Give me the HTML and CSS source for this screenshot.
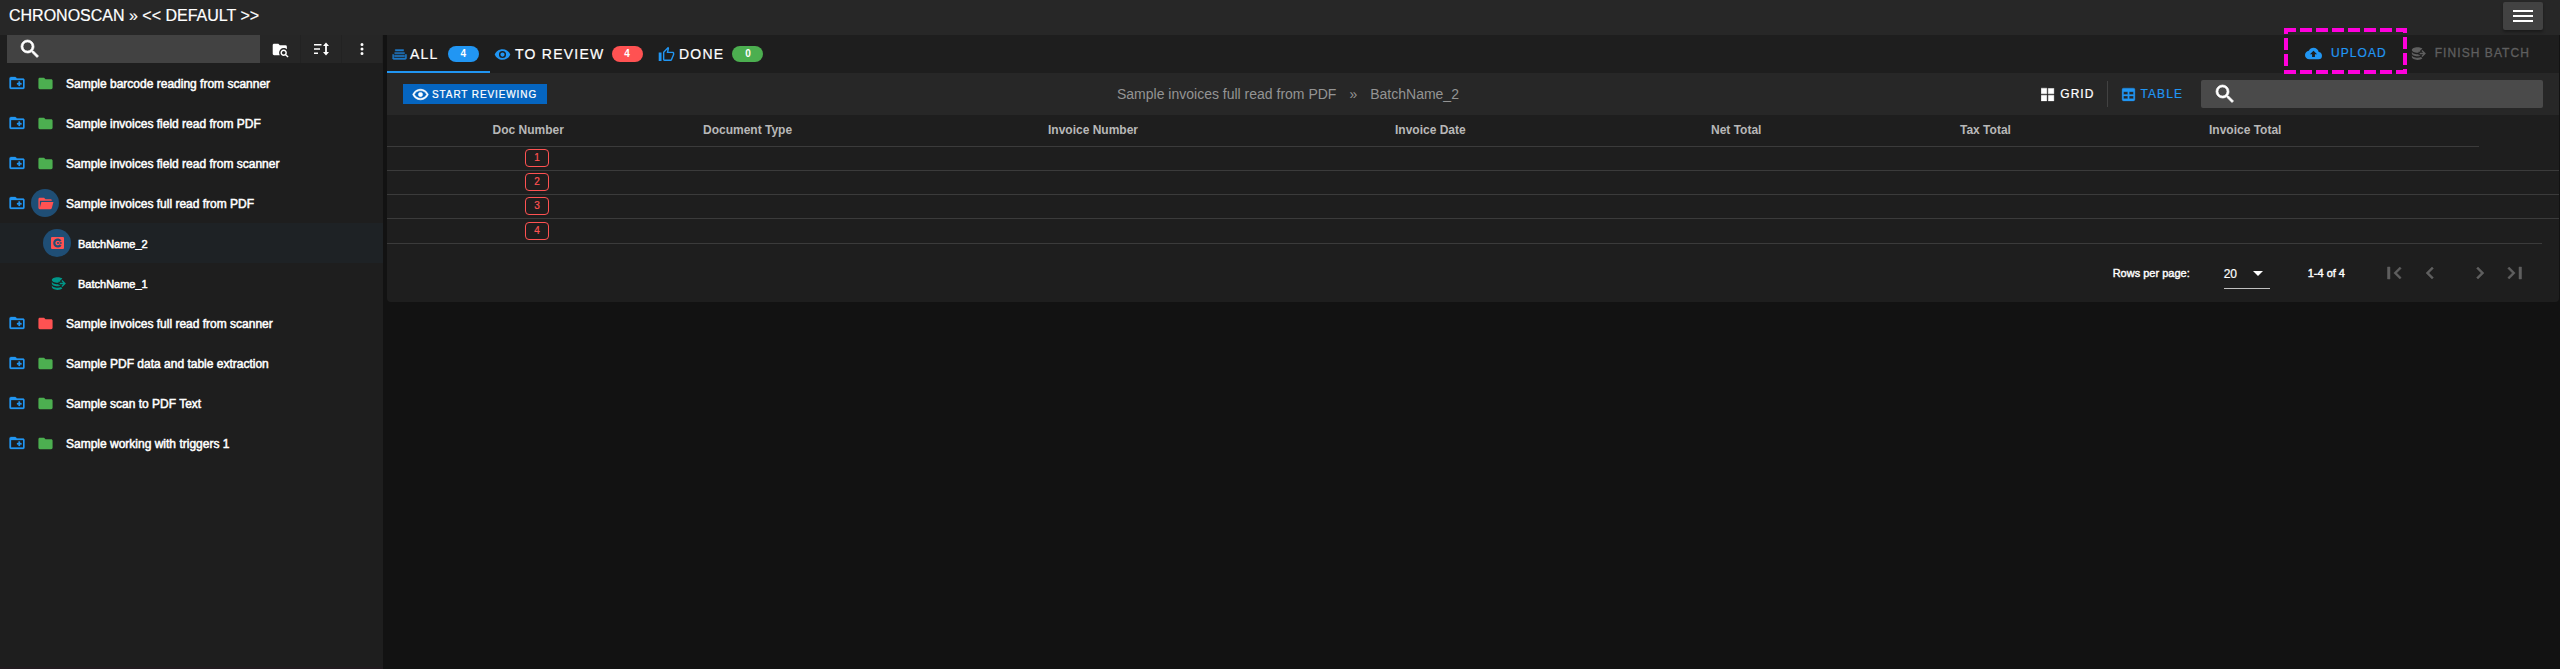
FILE: index.html
```html
<!DOCTYPE html>
<html lang="en">
<head>
<meta charset="utf-8">
<title>ChronoScan</title>
<link rel="stylesheet" href="styles.css">
</head>
<body>
<svg class="defs" width="0" height="0">
  <symbol id="magnify" viewBox="0 0 24 24"><path d="M9.5,3A6.5,6.5 0 0,1 16,9.5C16,11.11 15.41,12.59 14.44,13.73L14.71,14H15.5L20.5,19L19,20.5L14,15.5V14.71L13.73,14.44C12.59,15.41 11.11,16 9.5,16A6.5,6.5 0 0,1 3,9.5A6.5,6.5 0 0,1 9.5,3M9.5,5C7,5 5,7 5,9.5C5,12 7,14 9.5,14C12,14 14,12 14,9.5C14,7 12,5 9.5,5Z" stroke="currentColor" stroke-width=".7"/></symbol>
  <symbol id="folder" viewBox="0 0 24 24"><path d="M10,4H4C2.89,4 2,4.89 2,6V18A2,2 0 0,0 4,20H20A2,2 0 0,0 22,18V8C22,6.89 21.1,6 20,6H12L10,4Z"/></symbol>
  <symbol id="folder-open" viewBox="0 0 24 24"><path d="M19,20H4C2.89,20 2,19.1 2,18V6C2,4.89 2.89,4 4,4H10L12,6H19A2,2 0 0,1 21,8H4V18L6.14,10H23.21L20.93,18.5C20.7,19.37 19.92,20 19,20Z"/></symbol>
  <symbol id="folder-add" viewBox="0 0 24 24"><path d="M20,18H4V8H20M20,6H12L10,4H4A2,2 0 0,0 2,6V18A2,2 0 0,0 4,20H20A2,2 0 0,0 22,18V8C22,6.89 21.1,6 20,6M14,10V12H12V14H14V16H16V14H18V12H16V10Z" stroke="currentColor" stroke-width=".4"/></symbol>
  <symbol id="folder-search" viewBox="0 0 24 24"><path d="M16.5,12C19,12 21,14 21,16.5C21,17.38 20.75,18.21 20.31,18.9L23.39,22L22,23.39L18.88,20.32C18.19,20.75 17.37,21 16.5,21C14,21 12,19 12,16.5C12,14 14,12 16.5,12M16.5,14A2.5,2.5 0 0,0 14,16.5A2.5,2.5 0 0,0 16.5,19A2.5,2.5 0 0,0 19,16.5A2.5,2.5 0 0,0 16.5,14M9,4L11,6H19A2,2 0 0,1 21,8V11.81C19.83,10.69 18.25,10 16.5,10A6.5,6.5 0 0,0 10,16.5C10,17.79 10.37,19 11,20H3C1.89,20 1,19.1 1,18V6C1,4.89 1.89,4 3,4H9Z"/></symbol>
  <symbol id="sort" viewBox="0 0 18 18"><path d="M2,4H9.5V5.5H2ZM2,8.2H8V9.7H2ZM2,12.5H6V14H2ZM14,2.5L17,6H14.9V12H17L14,15.5L11,12H13.1V6H11Z"/></symbol>
  <symbol id="dots" viewBox="0 0 24 24"><path d="M12,16A2,2 0 0,1 14,18A2,2 0 0,1 12,20A2,2 0 0,1 10,18A2,2 0 0,1 12,16M12,10A2,2 0 0,1 14,12A2,2 0 0,1 12,14A2,2 0 0,1 10,12A2,2 0 0,1 12,10M12,4A2,2 0 0,1 14,6A2,2 0 0,1 12,8A2,2 0 0,1 10,6A2,2 0 0,1 12,4Z"/></symbol>
  <symbol id="database-export" viewBox="0 0 24 24"><path d="M12,3C7.58,3 4,4.79 4,7C4,9.21 7.58,11 12,11C12.5,11 13,10.97 13.5,10.92V9.5H16.39L15.39,8.5L18.9,5C17.5,3.8 14.94,3 12,3M18.92,7.08L17.5,8.5L20,11H15V13H20L17.5,15.5L18.92,16.92L23.84,12M4,9V12C4,14.21 7.58,16 12,16C13.17,16 14.26,15.85 15.25,15.63L16.38,14.5H13.5V12.92C13,12.97 12.5,13 12,13C7.58,13 4,11.21 4,9M4,14V17C4,19.21 7.58,21 12,21C14.94,21 17.5,20.2 18.9,19L17,17.1C15.61,17.66 13.9,18 12,18C7.58,18 4,16.21 4,14Z"/></symbol>
  <symbol id="eye" viewBox="0 0 24 24"><path d="M12,9A3,3 0 0,0 9,12A3,3 0 0,0 12,15A3,3 0 0,0 15,12A3,3 0 0,0 12,9M12,17A5,5 0 0,1 7,12A5,5 0 0,1 12,7A5,5 0 0,1 17,12A5,5 0 0,1 12,17M12,4.5C7,4.5 2.73,7.61 1,12C2.73,16.39 7,19.5 12,19.5C17,19.5 21.27,16.39 23,12C21.27,7.61 17,4.5 12,4.5Z"/></symbol>
  <symbol id="eye-outline" viewBox="0 0 24 24"><path stroke="currentColor" stroke-width=".8" d="M12,9A3,3 0 0,1 15,12A3,3 0 0,1 12,15A3,3 0 0,1 9,12A3,3 0 0,1 12,9M12,4.5C17,4.5 21.27,7.61 23,12C21.27,16.39 17,19.5 12,19.5C7,19.5 2.73,16.39 1,12C2.73,7.61 7,4.5 12,4.5M3.18,12C4.83,15.36 8.24,17.5 12,17.5C15.76,17.5 19.17,15.36 20.82,12C19.17,8.64 15.76,6.5 12,6.5C8.24,6.5 4.83,8.64 3.18,12Z"/></symbol>
  <symbol id="thumb" viewBox="0 0 24 24"><path d="M5,9V21H1V9H5M9,21A2,2 0 0,1 7,19V9C7,8.45 7.22,7.95 7.59,7.59L14.17,1L15.23,2.06C15.5,2.33 15.67,2.7 15.67,3.11L15.64,3.43L14.69,8H21C22.11,8 23,8.9 23,10V12C23,12.26 22.95,12.5 22.86,12.73L19.84,19.78C19.54,20.5 18.83,21 18,21H9M9,19H18.03L21,12V10H12.21L13.34,4.68L9,9.03V19Z"/></symbol>
  <symbol id="tray" viewBox="0 0 24 24"><path d="M18 5H6V7H18M5 9H19V11H5M2 12H4V17H20V12H22V17A2 2 0 0 1 20 19H4A2 2 0 0 1 2 17M19 13H5V15H19Z" stroke="currentColor" stroke-width=".6"/></symbol>
  <symbol id="cloud-upload" viewBox="0 0 24 24"><path d="M14,13V17H10V13H7L12,8L17,13M19.35,10.03C18.67,6.59 15.64,4 12,4C9.11,4 6.6,5.64 5.35,8.03C2.34,8.36 0,10.9 0,14A6,6 0 0,0 6,20H19A5,5 0 0,0 24,15C24,12.36 21.95,10.22 19.35,10.03Z"/></symbol>
  <symbol id="grid" viewBox="0 0 24 24"><path d="M3,11H11V3H3M3,21H11V13H3M13,21H21V13H13M13,3V11H21V3" stroke="currentColor" stroke-width=".5"/></symbol>
  <symbol id="table" viewBox="0 0 24 24"><path d="M5,3H19A2,2 0 0,1 21,5V19A2,2 0 0,1 19,21H5A2,2 0 0,1 3,19V5A2,2 0 0,1 5,3M5,8V12H11V8H5M13,8V12H19V8H13M5,14V18H11V14H5M13,14V18H19V14H13Z" stroke="currentColor" stroke-width=".5"/></symbol>
  <symbol id="page-first" viewBox="0 0 24 24"><path d="M19.2,16.59L14.6,12L19.2,7.41L17.8,6L11.8,12L17.8,18ZM5.5,6H8V18H5.5Z" stroke="currentColor" stroke-width=".5"/></symbol>
  <symbol id="chevron" viewBox="0 0 24 24"><path d="M15.41,16.58L10.83,12L15.41,7.41L14,6L8,12L14,18L15.41,16.58Z" stroke="currentColor" stroke-width=".5"/></symbol>
</svg>

<header class="app-bar">
  <h1 class="title">CHRONOSCAN » &lt;&lt; DEFAULT &gt;&gt;</h1>
  <button class="menu"><i></i><i></i><i></i></button>
</header>

<div class="body">
  <aside class="sidebar">
    <div class="tools">
      <div class="side-search"><svg class="i24"><use href="#magnify"/></svg></div>
      <button class="tool"><svg class="i17"><use href="#folder-search"/></svg></button>
      <button class="tool"><svg class="i18"><use href="#sort"/></svg></button>
      <button class="tool"><svg class="i18"><use href="#dots"/></svg></button>
    </div>
    <div class="job"><svg class="i18 add"><use href="#folder-add"/></svg><span class="dot"><svg class="i17 green"><use href="#folder"/></svg></span><span class="name">Sample barcode reading from scanner</span></div>
    <div class="job"><svg class="i18 add"><use href="#folder-add"/></svg><span class="dot"><svg class="i17 green"><use href="#folder"/></svg></span><span class="name">Sample invoices field read from PDF</span></div>
    <div class="job"><svg class="i18 add"><use href="#folder-add"/></svg><span class="dot"><svg class="i17 green"><use href="#folder"/></svg></span><span class="name">Sample invoices field read from scanner</span></div>
    <div class="job"><svg class="i18 add"><use href="#folder-add"/></svg><span class="dot active"><svg class="i17 red"><use href="#folder-open"/></svg></span><span class="name">Sample invoices full read from PDF</span></div>
    <div class="job batch selected"><span class="dot active"><svg class="batch-icon" viewBox="0 0 13 12"><rect width="13" height="12" rx="1" fill="#ff5252"/><path d="M9.6 4.2A3.4 3.4 0 1 0 9.6 7.8" fill="none" stroke="#1f4e75" stroke-width="2.2"/><path d="M6 6H11" stroke="#1f4e75" stroke-width="1.6" stroke-dasharray="2 .7"/></svg></span><span class="name">BatchName_2</span></div>
    <div class="job batch"><span class="dot"><svg class="i17 teal"><use href="#database-export"/></svg></span><span class="name">BatchName_1</span></div>
    <div class="job"><svg class="i18 add"><use href="#folder-add"/></svg><span class="dot"><svg class="i17 red"><use href="#folder"/></svg></span><span class="name">Sample invoices full read from scanner</span></div>
    <div class="job"><svg class="i18 add"><use href="#folder-add"/></svg><span class="dot"><svg class="i17 green"><use href="#folder"/></svg></span><span class="name">Sample PDF data and table extraction</span></div>
    <div class="job"><svg class="i18 add"><use href="#folder-add"/></svg><span class="dot"><svg class="i17 green"><use href="#folder"/></svg></span><span class="name">Sample scan to PDF Text</span></div>
    <div class="job"><svg class="i18 add"><use href="#folder-add"/></svg><span class="dot"><svg class="i17 green"><use href="#folder"/></svg></span><span class="name">Sample working with triggers 1</span></div>
  </aside>

  <main class="main">
    <section class="panel">
      <nav class="tabs">
        <div class="tab tab-all"><svg class="i17"><use href="#tray"/></svg><span class="label">ALL</span><b class="badge blue-bg">4</b></div>
        <div class="tab tab-review"><svg class="i17"><use href="#eye"/></svg><span class="label">TO REVIEW</span><b class="badge red-bg">4</b></div>
        <div class="tab tab-done"><svg class="i17"><use href="#thumb"/></svg><span class="label">DONE</span><b class="badge green-bg">0</b></div>
        <div class="actions">
          <button class="action upload"><svg class="i17"><use href="#cloud-upload"/></svg>UPLOAD
            <svg class="marker" viewBox="0 0 123 46" fill="none" stroke="#ff00dc" stroke-width="4">
              <path d="M0 2H123M0 44H123" stroke-dasharray="12 4"/>
              <path d="M2 0V6M2 10V22M2 26V38M2 42V46M121 0V5M121 9V21M121 25V37M121 41V46"/>
            </svg>
          </button>
          <button class="action finish"><svg class="i17"><use href="#database-export"/></svg>FINISH BATCH</button>
        </div>
      </nav>
      <div class="toolbar">
        <button class="start"><svg class="i17"><use href="#eye-outline"/></svg>START REVIEWING</button>
        <div class="crumbs"><span>Sample invoices full read from PDF</span><span>»</span><span>BatchName_2</span></div>
        <div class="views">
          <button class="view"><svg class="i17"><use href="#grid"/></svg>GRID</button>
          <button class="view on"><svg class="i17"><use href="#table"/></svg>TABLE</button>
          <div class="search"><svg class="i24"><use href="#magnify"/></svg></div>
        </div>
      </div>
      <div class="thead"><span>Doc Number</span><span>Document Type</span><span>Invoice Number</span><span>Invoice Date</span><span>Net Total</span><span>Tax Total</span><span>Invoice Total</span></div>
      <div class="row"><span class="chip">1</span></div>
      <div class="row"><span class="chip">2</span></div>
      <div class="row"><span class="chip">3</span></div>
      <div class="row last"><span class="chip">4</span></div>
      <footer class="pager">
        <span class="rpp">Rows per page:</span>
        <span class="select">20<i class="caret"></i></span>
        <span class="range">1-4 of 4</span>
        <svg class="i24 nav-first"><use href="#page-first"/></svg>
        <svg class="i24 nav-prev"><use href="#chevron"/></svg>
        <svg class="i24 flip nav-next"><use href="#chevron"/></svg>
        <svg class="i24 flip"><use href="#page-first"/></svg>
      </footer>
    </section>
  </main>
</div>
</body>
</html>
```
FILE: styles.css
```css
* { box-sizing: border-box; }
body { margin: 0; width: 2560px; height: 669px; overflow: hidden; background: #121212; color: #fff; font-family: "Liberation Sans", Arial, sans-serif; font-size: 12px; }
button { border: 0; padding: 0; margin: 0; background: none; color: inherit; font: inherit; white-space: nowrap; }
svg { fill: currentColor; display: block; flex: none; }
.defs { position: absolute; }
.i17 { width: 17px; height: 17px; }
.i18 { width: 18px; height: 18px; }
.i24 { width: 24px; height: 24px; }
.flip { transform: scaleX(-1); }
.green { color: #4caf50; }
.red { color: #ff5252; }
.teal { color: #009688; }

.app-bar { height: 35px; background: #272727; display: flex; justify-content: space-between; align-items: flex-start; padding: 2px 17px 0 9px; }
.title { margin: 0; font-size: 16px; font-weight: 400; line-height: 27px; -webkit-text-stroke: .2px #fff; }
.menu { width: 40px; height: 28px; border-radius: 2px; background: #424242; box-shadow: 0 2px 3px rgba(0,0,0,.35); display: flex; flex-direction: column; align-items: center; justify-content: center; gap: 3px; }
.menu i { width: 20px; height: 2px; background: #fff; }

.body { display: flex; height: 634px; }
.sidebar { width: 383px; margin-right: 4px; background: #1e1e1e; border-bottom: 2px solid #221c20; flex: none; }
.tools { display: flex; height: 28px; padding-left: 7px; }
.side-search { width: 253px; background: #424242; padding: 2px 0 0 11px; }
.tool { width: 41px; background: #262626; display: flex; align-items: center; justify-content: center; border-right: 1px solid #222; }
.job { height: 40px; display: flex; align-items: center; padding-left: 8px; white-space: nowrap; }
.name { padding-top: 1px; -webkit-text-stroke: .5px #fff; }
.add { color: #2196f3; margin-right: 5px; }
.dot { width: 28px; height: 28px; border-radius: 50%; display: flex; align-items: center; justify-content: center; margin-right: 7px; flex: none; }
.dot.active { background: #1f4e75; }
.batch { padding-left: 43px; font-size: 11px; }
.selected { background: #1e2225; }
.batch-icon { width: 13px; height: 12px; }

.main { width: 2172px; }
.panel { background: #1e1e1e; border-radius: 0 0 4px 4px; height: 267px; }
.tabs { height: 38px; display: flex; }
.tab { display: flex; align-items: center; font-size: 14px; letter-spacing: 1.25px; color: #fff; }
.tab svg { color: #2196f3; margin-right: 3px; }
.tab .label { -webkit-text-stroke: .2px #fff; }
.tab-all { width: 103px; padding-left: 4px; border-bottom: 2px solid #2196f3; padding-top: 2px; }
.tab-all svg { color: #1e78c5; margin-right: 2px; }
.tab-all .badge { margin-left: 9px; }
.tab-review { padding-left: 4px; width: 168px; }
.tab-review svg { margin-right: 4px; }
.tab-review .badge { margin-left: 7px; }
.tab-done { width: 130px; }
.tab-done svg { margin-right: 4px; }
.badge { width: 31px; height: 16px; border-radius: 8px; font-size: 10px; line-height: 16px; text-align: center; letter-spacing: 0; margin-left: 8px; }
.blue-bg { background: #2196f3; }
.red-bg { background: #ff5252; }
.green-bg { background: #4caf50; }
.actions { margin-left: auto; display: flex; padding-right: 29px; height: 36px; }
.action { display: flex; align-items: center; letter-spacing: 1.07px; gap: 9px; }
.upload { color: #2196f3; position: relative; margin-right: 22px; -webkit-text-stroke: .2px #2196f3; }
.finish { color: #5f5f5f; -webkit-text-stroke: .3px #5f5f5f; }
.marker { position: absolute; left: -21px; top: -7px; width: 123px; height: 46px; }

.toolbar { height: 42px; background: #272727; display: flex; align-items: center; padding: 0 16px; }
.start { width: 144px; height: 20px; background: #0565c0; display: flex; align-items: center; gap: 3px; padding-left: 9px; font-size: 10px; letter-spacing: .893px; -webkit-text-stroke: .2px #fff; }
.crumbs { display: flex; gap: 13px; font-size: 14px; color: #949494; margin-left: 570px; }
.views { display: flex; align-items: center; margin-left: auto; }
.view { height: 26px; display: flex; align-items: center; gap: 4px; letter-spacing: 1.07px; padding-right: 12px; -webkit-text-stroke: .2px; }
.view.on { color: #2196f3; border-left: 1px solid #424242; padding: 0 18px 0 12px; }
.search { width: 342px; height: 28px; border-radius: 2px; background: #4a4a4a; padding: 2px 0 0 12px; }

.thead { width: 2092px; height: 32px; border-bottom: 1px solid #3b3b3b; display: grid; grid-template-columns: 210.5px 345px 347px 316px 249px 249px 1fr; padding-left: 105.5px; font-weight: 700; color: #b8b8b8; line-height: 30px; }
.row { height: 24px; border-bottom: 1px solid #3b3b3b; padding: 2px 0 0 138px; }
.row.last { height: 25px; width: 2155px; padding-top: 3px; }
.chip { display: block; width: 24px; height: 18px; border: 1px solid #ff5252; border-radius: 4px; color: #ff5252; font-size: 10px; line-height: 16px; text-align: center; -webkit-text-stroke: .2px #ff5252; }
.pager { height: 58px; display: flex; align-items: center; justify-content: flex-end; padding-right: 32px; font-size: 11px; color: #fff; }
.pager svg { color: #5f5f5f; }
.rpp, .range { -webkit-text-stroke: .4px #fff; }
.select { width: 46px; height: 32px; margin: 0 38px 0 34px; padding-top: 2px; border-bottom: 1px solid #c0c0c0; font-size: 12px; display: flex; align-items: center; gap: 16px; -webkit-text-stroke: .2px #fff; }
.caret { border: 5px solid transparent; border-top-color: #fff; border-bottom: 0; }
.nav-first { margin-left: 37px; margin-right: 1px; }
.nav-prev { margin: 0 26px 0 11px; }
.nav-next { margin-right: 11px; }
```
